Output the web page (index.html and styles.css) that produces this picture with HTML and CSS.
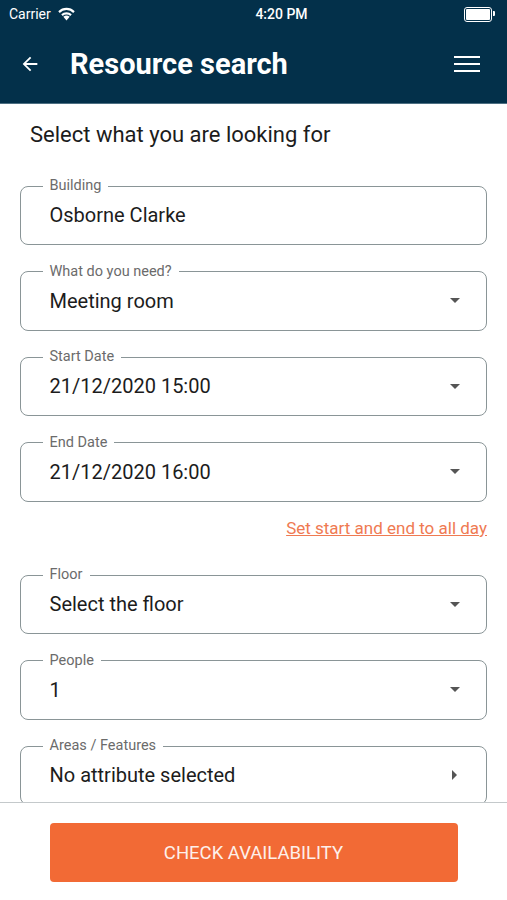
FILE: index.html
```html
<!DOCTYPE html>
<html lang="en">
<head>
  <meta charset="UTF-8">
  <meta name="viewport" content="width=device-width, initial-scale=1.0">
  <title>Resource search</title>
  <link rel="stylesheet" href="styles.css">
</head>
<body>
  <div class="app">
    <header class="topbar">
      <div class="status">
        <div class="status-left">
          <span>Carrier</span>
          <svg class="wifi" width="19" height="14" viewBox="0 0 18 13">
            <path d="M9 12.6 L6 9.1 A4.6 4.6 0 0 1 12 9.1 Z" fill="#fff"/>
            <path d="M4 6.8 A7.4 7.4 0 0 1 14 6.8 L12.6 8.4 A5.3 5.3 0 0 0 5.4 8.4 Z" fill="#fff"/>
            <path d="M1.2 3.8 A11.2 11.2 0 0 1 16.8 3.8 L15.4 5.5 A9 9 0 0 0 2.6 5.5 Z" fill="#fff"/>
          </svg>
        </div>
        <span class="clock">4:20 PM</span>
        <div class="battery"><span></span></div>
      </div>
      <div class="titlebar">
        <svg class="back" width="22" height="22" viewBox="0 0 24 24">
          <path d="M20 11H7.8l5.6-5.6L12 4l-8 8 8 8 1.4-1.4L7.8 13H20z" fill="#fff"/>
        </svg>
        <h1>Resource search</h1>
        <svg class="menu" width="26" height="18" viewBox="0 0 26 18">
          <rect x="0" y="1" width="26" height="2" fill="#fff"/>
          <rect x="0" y="8" width="26" height="2" fill="#fff"/>
          <rect x="0" y="15" width="26" height="2" fill="#fff"/>
        </svg>
      </div>
    </header>

    <main class="content">
      <h2>Select what you are looking for</h2>

      <fieldset class="field">
        <legend>Building</legend>
        <div class="value">Osborne Clarke</div>
      </fieldset>

      <fieldset class="field">
        <legend>What do you need?</legend>
        <div class="value">Meeting room <span class="caret"></span></div>
      </fieldset>

      <fieldset class="field">
        <legend>Start Date</legend>
        <div class="value">21/12/2020 15:00 <span class="caret"></span></div>
      </fieldset>

      <fieldset class="field">
        <legend>End Date</legend>
        <div class="value">21/12/2020 16:00 <span class="caret"></span></div>
      </fieldset>

      <div class="allday"><a href="#">Set start and end to all day</a></div>

      <fieldset class="field">
        <legend>Floor</legend>
        <div class="value">Select the floor <span class="caret"></span></div>
      </fieldset>

      <fieldset class="field">
        <legend>People</legend>
        <div class="value">1 <span class="caret"></span></div>
      </fieldset>

      <fieldset class="field">
        <legend>Areas / Features</legend>
        <div class="value">No attribute selected <span class="caret right"></span></div>
      </fieldset>
    </main>

    <footer class="bottom">
      <button>Check availability</button>
    </footer>
  </div>
</body>
</html>
```

FILE: styles.css
```css
body {
  margin: 0;
  font-family: Roboto, "Liberation Sans", sans-serif;
  background: #fff;
  color: #1c1c1c;
}
.app {
  width: 507px;
  height: 900px;
  display: flex;
  flex-direction: column;
  overflow: hidden;
}
.topbar {
  background: #03304a;
  color: #fff;
  height: 103px;
  box-shadow: 0 1px 0 #4d6f82;
  position: relative;
  z-index: 1;
}
.status {
  height: 28px;
  display: flex;
  align-items: center;
  justify-content: space-between;
  padding: 0 9px;
  font-size: 14px;
}
.status-left {
  display: flex;
  align-items: center;
  gap: 6px;
  width: 90px;
}
.clock {
  font-weight: 500;
}
.battery {
  width: 24px;
  height: 11px;
  border: 1px solid #fff;
  border-radius: 3px;
  padding: 1px;
  margin-right: 6px;
  position: relative;
}
.battery span {
  display: block;
  height: 100%;
  background: #fff;
  border-radius: 1px;
}
.battery::after {
  content: "";
  position: absolute;
  right: -4px;
  top: 3px;
  width: 2px;
  height: 5px;
  background: #fff;
  border-radius: 0 1px 1px 0;
}
.titlebar {
  display: flex;
  align-items: center;
  height: 72px;
  padding: 0 27px 0 19px;
}
.titlebar h1 {
  flex: 1;
  margin: 0 0 0 29px;
  font-size: 29px;
  font-weight: 700;
}
.content {
  flex: 1;
  overflow: hidden;
  padding: 0 20px;
}
.content h2 {
  font-size: 22px;
  line-height: 26px;
  font-weight: 400;
  margin: 19px 0 30px 10px;
}
.field {
  margin: 0 0 18.5px;
  border: 1.5px solid #8a9597;
  border-radius: 8px;
  padding: 8px 26px 16px 28.5px;
}
.field legend {
  font-size: 14.5px;
  line-height: 16px;
  color: #6b6b6b;
  padding: 0 7px;
  margin-left: -7px;
}
.value {
  font-size: 20px;
  line-height: 26px;
  display: flex;
  align-items: center;
  justify-content: space-between;
}
.caret {
  width: 0;
  height: 0;
  border-left: 5px solid transparent;
  border-right: 5px solid transparent;
  border-top: 5px solid #555;
}
.caret.right {
  border-top: 5px solid transparent;
  border-bottom: 5px solid transparent;
  border-left: 5px solid #555;
  border-right: 0;
  margin-right: 3px;
}
.allday {
  text-align: right;
  line-height: 20px;
  margin: -2px 0 28px;
}
.allday a {
  color: #ef7a52;
  font-size: 17px;
}
.bottom {
  height: 98px;
  border-top: 1px solid #c4c9cb;
  display: flex;
  justify-content: center;
  padding-top: 20px;
  box-sizing: border-box;
}
.bottom button {
  width: 408px;
  height: 59px;
  background: #f26a35;
  color: #fdf0ea;
  border: none;
  border-radius: 4px;
  font-family: Roboto, "Liberation Sans", sans-serif;
  font-size: 18.5px;
  text-transform: uppercase;
}
```
